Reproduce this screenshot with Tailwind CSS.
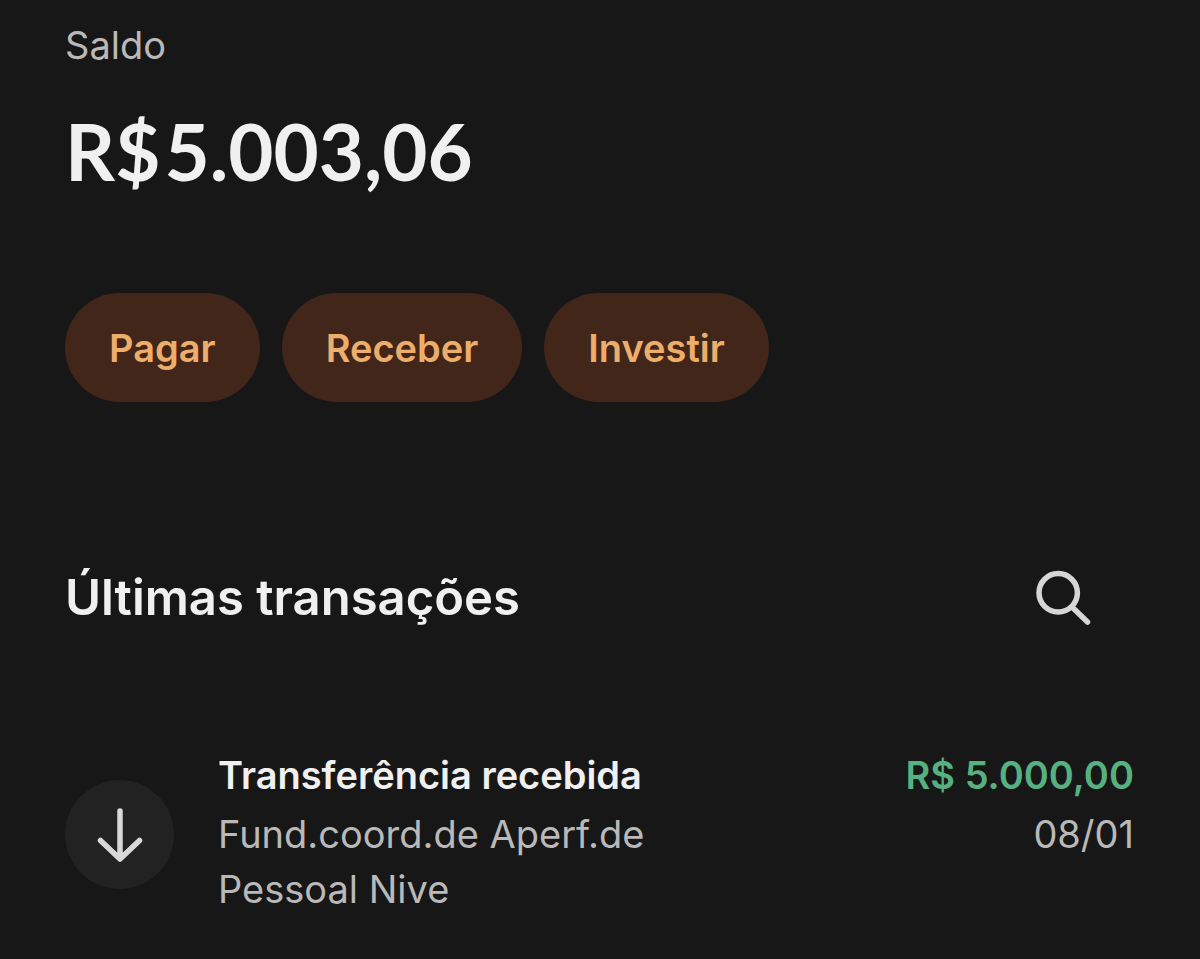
<!DOCTYPE html>
<html lang="pt-BR">
<head>
    <meta charset="UTF-8">
    <meta name="viewport" content="width=device-width, initial-scale=1.0">
    <title>Saldo</title>
    <script src="https://cdn.jsdelivr.net/npm/@tailwindcss/browser@4"></script>
</head>
<body class="bg-[#171717] font-['Inter',sans-serif] text-[#f0f0f0]">
    <main class="pt-5 pr-[66px] pb-10 pl-[65px]">
        <!-- Balance -->
        <section>
            <h1 class="text-[38px] leading-[50px] text-[#b9b9b9]">Saldo</h1>
            <p class="mt-[26px] flex gap-1 font-['Lato',sans-serif] text-[78px] leading-[110px] font-bold">
                <span>R$</span>
                <span>5.003,06</span>
            </p>
        </section>

        <!-- Actions -->
        <div class="mt-[87px] flex gap-[22px]">
            <button type="button" class="h-[109px] rounded-full bg-[#422619] px-11 pt-0.5 text-[38px] font-semibold text-[#edad6b]">Pagar</button>
            <button type="button" class="h-[109px] rounded-full bg-[#422619] px-11 pt-0.5 text-[38px] font-semibold text-[#edad6b]">Receber</button>
            <button type="button" class="h-[109px] rounded-full bg-[#422619] px-11 pt-0.5 text-[38px] font-semibold text-[#edad6b]">Investir</button>
        </div>

        <!-- Transactions -->
        <section class="mt-[142px]">
            <div class="flex items-center justify-between pr-[42px]">
                <h2 class="text-[49px] leading-[108px] font-semibold">Últimas transações</h2>
                <button type="button" aria-label="Buscar">
                    <svg class="size-[56px]" viewBox="0 0 56 56" fill="none" stroke="#d6d6d6" stroke-width="5.5" stroke-linecap="round" aria-hidden="true">
                        <circle cx="22.2" cy="22.8" r="19.2" />
                        <path d="M36 37 51.5 52" />
                    </svg>
                </button>
            </div>

            <ul class="mt-[100px]">
                <li class="flex items-center">
                    <div class="flex size-[109px] shrink-0 items-center justify-center rounded-full bg-[#222222]">
                        <svg class="size-[56px]" viewBox="0 0 56 56" fill="none" stroke="#d8d8d8" stroke-width="5.5" stroke-linecap="round" stroke-linejoin="round" aria-hidden="true">
                            <path d="M28 4v47M8.500 33.500 28 52 47.500 33.500" />
                        </svg>
                    </div>
                    <div class="ml-11 w-[480px]">
                        <h3 class="text-[38px] leading-[46px] font-semibold">Transferência recebida</h3>
                        <p class="mt-[9px] text-[38px] leading-[55px] text-[#b9b9b9]">Fund.coord.de Aperf.de Pessoal Nive</p>
                    </div>
                    <div class="ml-auto self-start text-right">
                        <p class="text-[38px] leading-[46px] font-semibold text-[#57b07f]">R$ 5.000,00</p>
                        <p class="mt-[9px] text-[38px] leading-[55px] text-[#b9b9b9]">08/01</p>
                    </div>
                </li>
            </ul>
        </section>
    </main>
</body>
</html>
